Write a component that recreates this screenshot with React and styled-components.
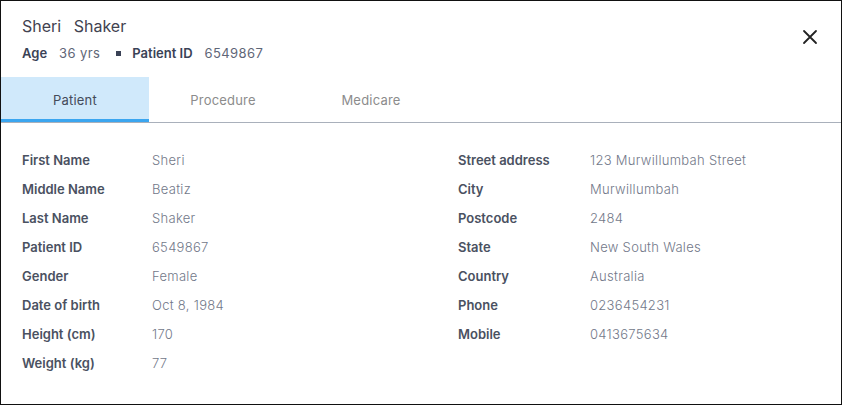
import React from "react";
import styled, { createGlobalStyle } from "styled-components";

const GlobalStyle = createGlobalStyle`
  html, body {
    margin: 0;
    padding: 0;
    background: #fff;
  }
  * {
    box-sizing: border-box;
  }
`;

const Frame = styled.div`
  width: 842px;
  height: 405px;
  border: 1px solid #111;
  background: #fff;
  font-family: Inter, "Noto Sans", sans-serif;
  display: flex;
  flex-direction: column;
`;

const Header = styled.div`
  position: relative;
  padding: 15px 21px 0;
  height: 76px;
`;

const Title = styled.div`
  font-size: 16px;
  line-height: 20px;
  color: #424250;
  word-spacing: 8px;
`;

const Meta = styled.div`
  margin-top: 8px;
  display: flex;
  align-items: center;
  gap: 12px;
  font-size: 13px;
  line-height: 18px;
`;

const MetaLabel = styled.span`
  font-weight: 600;
  color: #3a4256;
`;

const MetaValue = styled.span`
  color: #5f6677;
  letter-spacing: 0.4px;
`;

const Dot = styled.span`
  width: 5px;
  height: 5px;
  background: #3a4256;
  margin: 0 -1px 0 4px;
`;

const CloseButton = styled.button`
  position: absolute;
  top: 26px;
  right: 21px;
  width: 20px;
  height: 20px;
  padding: 0;
  border: 0;
  background: none;
  cursor: pointer;
  display: flex;
  align-items: center;
  justify-content: center;
`;

const Tabs = styled.div`
  display: flex;
  height: 46px;
  border-bottom: 1px solid #a9b0bb;
`;

const Tab = styled.div`
  width: 148px;
  display: flex;
  align-items: center;
  justify-content: center;
  font-size: 13px;
  letter-spacing: 0.2px;
  color: ${(p) => (p.active ? "#444b5a" : "#8c8c8c")};
  background: ${(p) => (p.active ? "#d0e9fb" : "transparent")};
  border-bottom: 3px solid ${(p) => (p.active ? "#3ba6f0" : "transparent")};
  padding-top: 3px;
`;

const Body = styled.div`
  display: grid;
  grid-template-columns: 436px 1fr;
  padding: 22px 21px 0;
`;

const Column = styled.div`
  display: flex;
  flex-direction: column;
`;

const Row = styled.div`
  display: flex;
  height: 29px;
  align-items: center;
  font-size: 13px;
`;

const Label = styled.div`
  width: ${(p) => p.width}px;
  font-weight: 600;
  color: #4a5161;
`;

const Value = styled.div`
  color: #727889;
  font-weight: 300;
  letter-spacing: 0.3px;
`;

const left = [
  ["First Name", "Sheri"],
  ["Middle Name", "Beatiz"],
  ["Last Name", "Shaker"],
  ["Patient ID", "6549867"],
  ["Gender", "Female"],
  ["Date of birth", "Oct 8, 1984"],
  ["Height (cm)", "170"],
  ["Weight (kg)", "77"],
];

const right = [
  ["Street address", "123 Murwillumbah Street"],
  ["City", "Murwillumbah"],
  ["Postcode", "2484"],
  ["State", "New South Wales"],
  ["Country", "Australia"],
  ["Phone", "0236454231"],
  ["Mobile", "0413675634"],
];

function Field({ label, value, width }) {
  return (
    <Row>
      <Label width={width}>{label}</Label>
      <Value>{value}</Value>
    </Row>
  );
}

export default function App() {
  return (
    <>
      <GlobalStyle />
      <Frame>
        <Header>
          <Title>Sheri Shaker</Title>
          <Meta>
            <MetaLabel>Age</MetaLabel>
            <MetaValue>36 yrs</MetaValue>
            <Dot />
            <MetaLabel>Patient ID</MetaLabel>
            <MetaValue>6549867</MetaValue>
          </Meta>
          <CloseButton aria-label="Close">
            <svg width="16" height="16" viewBox="0 0 16 16">
              <path
                d="M2 2 L14 14 M14 2 L2 14"
                stroke="#222"
                strokeWidth="1.8"
                strokeLinecap="round"
              />
            </svg>
          </CloseButton>
        </Header>

        <Tabs>
          <Tab active>Patient</Tab>
          <Tab>Procedure</Tab>
          <Tab>Medicare</Tab>
        </Tabs>

        <Body>
          <Column>
            {left.map(([l, v]) => (
              <Field key={l} label={l} value={v} width={130} />
            ))}
          </Column>
          <Column>
            {right.map(([l, v]) => (
              <Field key={l} label={l} value={v} width={132} />
            ))}
          </Column>
        </Body>
      </Frame>
    </>
  );
}
